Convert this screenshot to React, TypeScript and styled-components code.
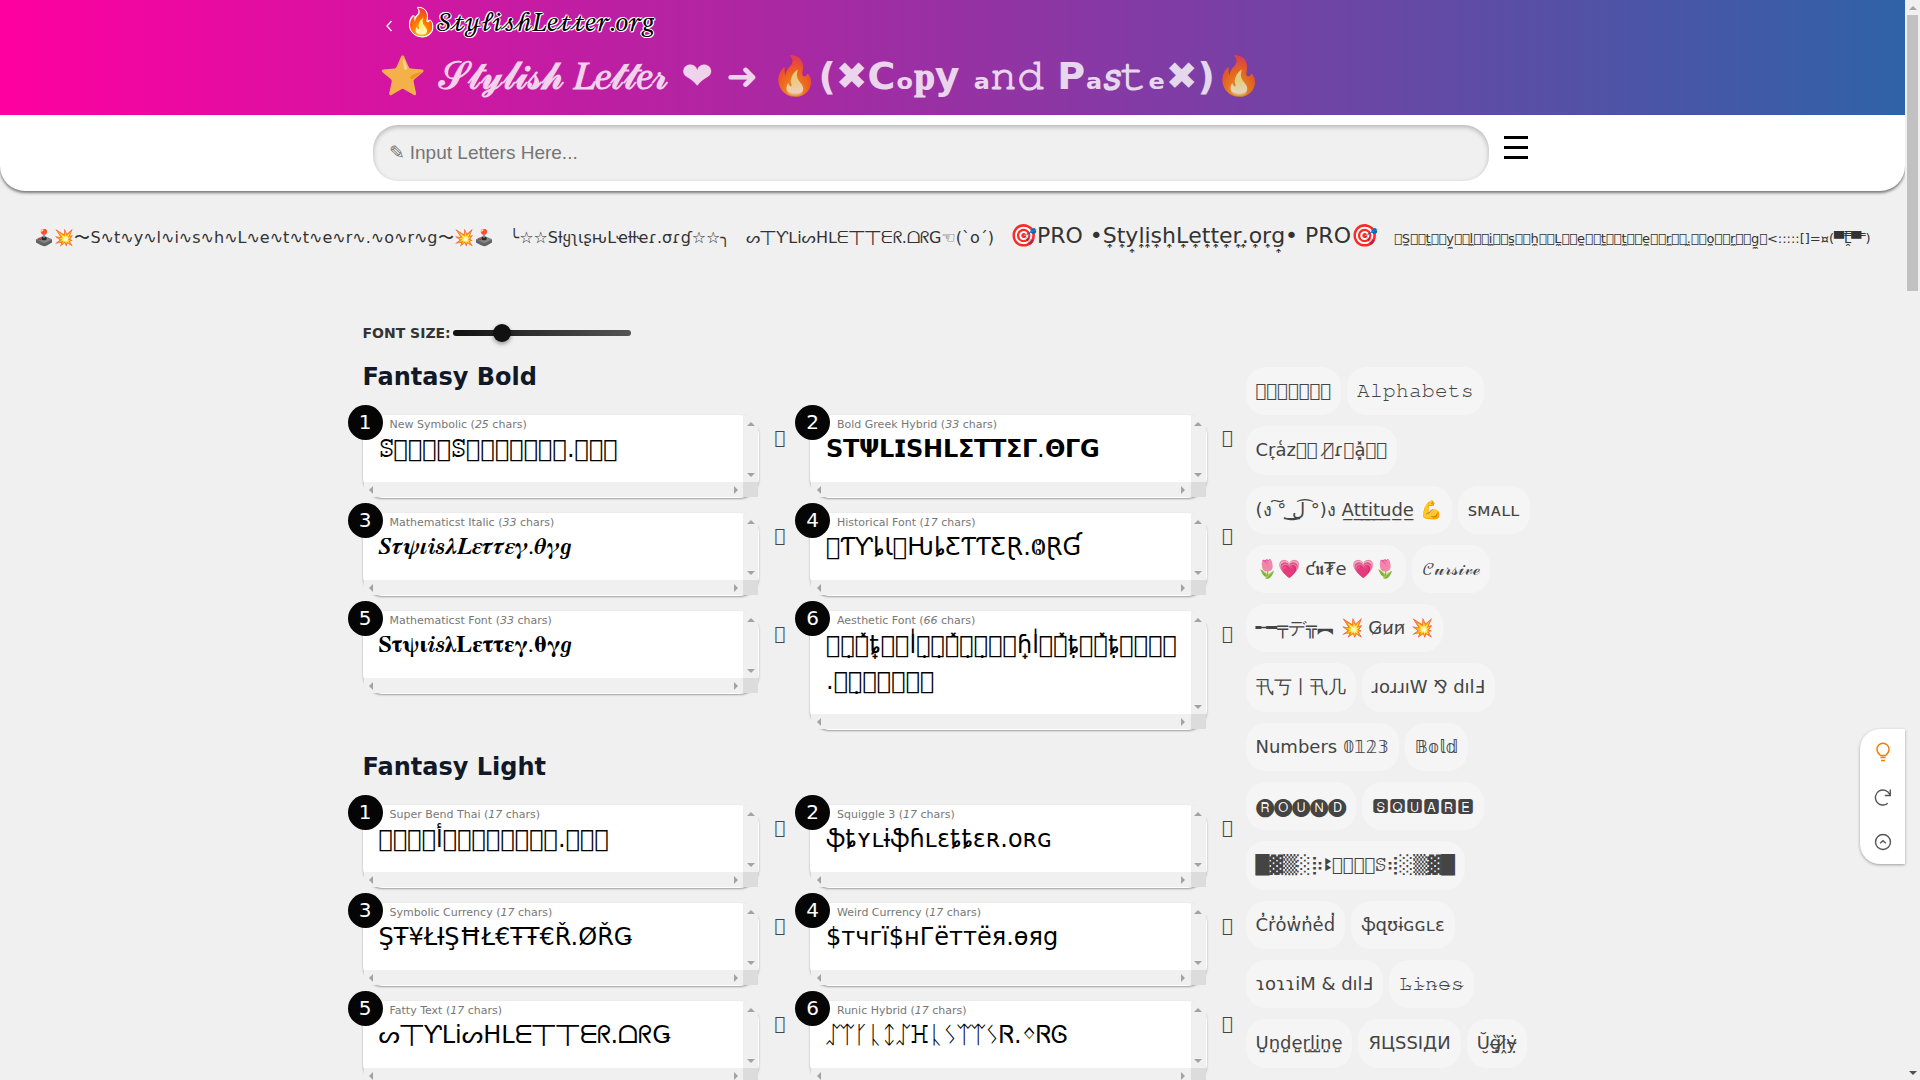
import React, { useState } from 'react';
import styled, { createGlobalStyle } from 'styled-components';

const SANS = '"DejaVu Sans", sans-serif';
const SERIF_MATH = '"FreeSerif", "DejaVu Sans", sans-serif';
const SCRIPT = '"STIX Two Math", "DejaVu Sans", sans-serif';
const CURSIVE = '"Latin Modern Math", "FreeSerif", "DejaVu Sans", sans-serif';

/* Placeholder box for a letter no installed font has */
const X = '\ue000';
const boxes = (n: number) => X.repeat(n);
const mark = (text: string, accent: string) => [...text].map((c) => c + accent).join('');

const GlobalStyle = createGlobalStyle`
  * { box-sizing: border-box; }
  body { margin: 0; background: #f0f0f0; color: #333; font-family: ${SANS}; }
  button { border: 0; padding: 0; background: none; font-family: inherit; cursor: pointer; }
`;

const Shell = styled.div`
  display: flex;
  align-items: flex-start;
`;
const Page = styled.div`
  flex: 1;
  min-width: 0;
`;

/* ---------- scroll bars ---------- */
const borders = {
  up: 'border-width: 0 4px 4px; border-bottom-color: currentColor;',
  down: 'border-width: 4px 4px 0; border-top-color: currentColor;',
  left: 'border-width: 4px 4px 4px 0; border-right-color: currentColor;',
  right: 'border-width: 4px 0 4px 4px; border-left-color: currentColor;',
};
const Arrow = styled.i<{ $dir: keyof typeof borders; $dark?: boolean }>`
  flex: none;
  width: 15px;
  height: 15px;
  display: grid;
  place-items: center;
  color: ${(p) => (p.$dark ? '#505050' : '#a3a3a3')};
  &::before {
    content: '';
    border: 0 solid transparent;
    ${(p) => borders[p.$dir]}
  }
`;
const PageScroll = styled.div`
  position: sticky;
  top: 0;
  width: 15px;
  height: 100vh;
  display: flex;
  flex-direction: column;
  background: #f0f0f0;
`;
const PageThumb = styled.div`
  flex: 276;
  margin: 0 2px;
  background: #c1c1c1;
`;
const Spacer = styled.div`
  flex: 774;
`;

/* ---------- header ---------- */
const Container = styled.div`
  width: 100%;
  max-width: 1180px;
  margin: 0 auto;
`;
const Hero = styled.header`
  background: linear-gradient(to right, #ff00a0, #2f62a7);
  padding-bottom: 11px;
`;
const Brand = styled.div`
  height: 48px;
  padding: 7px 20px 0;
  display: flex;
  align-items: flex-start;
  gap: 10px;
`;
const Back = styled.button`
  display: grid;
  place-items: center;
  width: 12px;
  height: 38px;
  color: #fff;
`;
const Logo = styled.a`
  height: 34px;
  font-family: ${SCRIPT};
  font-size: 26px;
  line-height: 34px;
  color: #000;
  text-decoration: none;
  white-space: nowrap;
  text-shadow: 1px 0 0 #fff, -1px 0 0 #fff, 0 1px 0 #fff, 0 -1px 0 #fff, 1px 1px 0 #fff, -1px -1px 0 #fff;
`;
const Title = styled.h1`
  margin: 0;
  padding-left: 16px;
  font-size: 38px;
  line-height: 56px;
  height: 56px;
  color: #fff;
  opacity: 0.8;
  white-space: nowrap;
`;
const Script = styled.span`
  font-family: ${SERIF_MATH};
`;
const SearchBar = styled.div`
  background: #fff;
  border-radius: 0 0 25px 25px;
  box-shadow: 0 2px 3px rgba(0, 0, 0, 0.5);
  padding: 10px 0;
`;
const SearchRow = styled(Container)`
  display: flex;
  padding: 0 5px 0 10px;
`;
const SearchInput = styled.input`
  flex: 1;
  min-width: 0;
  height: 56px;
  padding: 0 16px;
  border: 0;
  border-radius: 25px;
  background: #f0f0f0;
  box-shadow: inset 0 2px 5px rgba(0, 0, 0, 0.25);
  font-family: "Liberation Sans", Arial, sans-serif;
  font-size: 19px;
  outline: none;
  &::placeholder { color: #757575; }
`;
const MenuButton = styled.button`
  width: 44px;
  height: 44px;
  margin-left: 5px;
  display: grid;
  place-items: center;
`;

/* ---------- ticker ---------- */
const Ticker = styled.div`
  display: flex;
  justify-content: center;
  align-items: baseline;
  gap: 16px;
  padding: 30px 0 64px;
  white-space: nowrap;
  overflow: hidden;
`;
const TickerItem = styled.span<{ $size: number }>`
  font-size: ${(p) => p.$size}px;
  line-height: 30px;
  height: 30px;
`;

/* ---------- content ---------- */
const Content = styled(Container)`
  display: flex;
  gap: 3px;
`;
const Main = styled.main`
  flex: 1;
  min-width: 0;
`;
const SizeControl = styled.div`
  display: flex;
  align-items: center;
  height: 30px;
  gap: 2px;
`;
const SizeLabel = styled.label`
  font-size: 14px;
  font-weight: bold;
`;
const Slider = styled.input`
  appearance: none;
  width: 178px;
  height: 6px;
  margin: 0;
  border-radius: 3px;
  background: linear-gradient(to right, #111, #555);
  &::-webkit-slider-thumb {
    appearance: none;
    width: 18px;
    height: 18px;
    border-radius: 50%;
    background: #111;
    box-shadow: 0 2px 4px rgba(0, 0, 0, 0.4);
  }
`;
const Heading = styled.h2`
  margin: 13px 0 22px;
  font-size: 24px;
  line-height: 32px;
  color: #111827;
`;
const Grid = styled.div`
  display: grid;
  grid-template-columns: 1fr 1fr;
  gap: 15px;
  align-items: start;
  margin-bottom: 21px;
`;
const Cell = styled.div`
  display: flex;
  align-items: flex-start;
`;
const Card = styled.article`
  position: relative;
  flex: 1;
  min-width: 0;
  display: grid;
  grid-template-columns: 1fr 15px;
  grid-template-rows: 1fr 15px;
  border: 1px solid #fff;
  border-radius: 20px;
  background: #fff;
  box-shadow: 0 1px 2px rgba(0, 0, 0, 0.35);
`;
const Badge = styled.span`
  position: absolute;
  left: -16px;
  top: -11px;
  width: 35px;
  height: 35px;
  border-radius: 50%;
  background: #050505;
  color: #fff;
  font-size: 20px;
  line-height: 35px;
  text-align: center;
`;
const CardBody = styled.div`
  min-width: 0;
  padding: 3px 11px 15px 15px;
  background: #fff;
`;
const CardLabel = styled.div`
  padding-left: 11px;
  font-size: 11px;
  line-height: 12px;
  color: #777;
`;
const CardText = styled.div<{ $font: string }>`
  font-family: ${(p) => p.$font};
  line-height: 36px;
  min-height: 36px;
  color: #000;
  overflow-wrap: anywhere;
`;
const Track = styled.div<{ $vertical?: boolean }>`
  display: flex;
  flex-direction: ${(p) => (p.$vertical ? 'column' : 'row')};
  justify-content: space-between;
  background: #f0f0f0;
`;
const Corner = styled.div`
  background: #dcdcdc;
`;
const Copy = styled.button`
  width: 36px;
  margin-top: 13px;
  padding-left: 6px;
  font-size: 18px;
  line-height: 20px;
  color: #444;
`;

/* ---------- side links ---------- */
const Side = styled.nav`
  width: 297px;
  display: flex;
  flex-wrap: wrap;
  align-content: flex-start;
  gap: 11px 6px;
  padding-top: 49px;
`;
const Chip = styled.a<{ $font?: string }>`
  padding: 12px 10px;
  border-radius: 20px;
  background: #f5f5f5;
  color: #444;
  font-family: ${(p) => p.$font || SANS};
  font-size: 18px;
  line-height: 1.35;
  max-height: 49px;
  text-decoration: none;
  white-space: nowrap;
`;

/* ---------- floating tools ---------- */
const Tools = styled.div`
  position: fixed;
  right: 15px;
  bottom: 216px;
  width: 45px;
  display: flex;
  flex-direction: column;
  border-radius: 20px 0 0 20px;
  background: #fff;
  box-shadow: 0 1px 3px rgba(0, 0, 0, 0.35);
`;
const Tool = styled.button<{ $accent?: boolean }>`
  height: 45px;
  display: grid;
  place-items: center;
  color: ${(p) => (p.$accent ? '#f57c00' : '#555')};
`;

type Sample = { name: string; count: number; text: string; font?: string };

const BOLD: Sample[] = [
  { name: 'New Symbolic', count: 25, text: `ꕷ${boxes(4)}ꕷ${boxes(7)}.${boxes(3)}` },
  { name: 'Bold Greek Hybrid', count: 33, text: '𝗦𝗧𝝭𝗟𝗜𝗦𝗛𝗟𝝨𝗧𝗧𝝨𝝘.𝝝𝝘𝗚' },
  { name: 'Mathematicst Italic', count: 33, text: '𝑺𝝉𝝍𝜾𝒊𝒔𝝀𝑳𝜺𝝉𝝉𝜺𝜸.𝜽𝜸𝒈', font: SERIF_MATH },
  { name: 'Historical Font', count: 17, text: `${X}ƬƳȴƖ${X}ԊȴƸƬƬƸⱤ.\u2c19ⱤƓ` },
  { name: 'Mathematicst Font', count: 33, text: '𝐒𝛕𝛙𝛊𝒊𝒔𝛌𝐋𝛆𝛕𝛕𝛆𝛄.𝛉𝛄𝒈', font: SERIF_MATH },
  {
    name: 'Aesthetic Font',
    count: 66,
    text: `${X}${X}\u0323${X}\u033dȶ\u031f${X}${X}l\u030d${X}\u0323${X}\u0323${X}\u033d${X}\u0323${X}\u0323${X}${X}ɦ\u031fl\u030d${X}${X}\u033dȶ\u0323${X}${X}\u033dȶ\u0323${boxes(4)}.${X}${X}\u0323${boxes(5)}`,
  },
];
const LIGHT: Sample[] = [
  { name: 'Super Bend Thai', count: 17, text: `${boxes(4)}أ${boxes(8)}.${boxes(3)}` },
  { name: 'Squiggle 3', count: 17, text: 'ֆȶʏʟɨֆɦʟɛȶȶɛʀ.օʀɢ' },
  { name: 'Symbolic Currency', count: 17, text: 'ŞŦ¥ŁƗŞĦŁ€ŦŦ€Ř.ØŘǤ' },
  { name: 'Weird Currency', count: 17, text: '$тчгї$нГёттёя.өяg' },
  { name: 'Fatty Text', count: 17, text: 'ᔕ丅ƳᒪiᔕHᒪᗴ丅丅ᗴᖇ.ᗝᖇǤ' },
  { name: 'Runic Hybrid', count: 17, text: 'ᛢᛠᚴᚳᛨᛢꖾᚳᛊᛠᛠᛊᏒ.ᛜᏒᎶ' },
];

const CHIPS: { text: string; font?: string }[] = [
  { text: boxes(7) },
  { text: '𝙰𝚕𝚙𝚑𝚊𝚋𝚎𝚝𝚜' },
  { text: `Cr\u031fa\u0351z${X}${X} ${X}\u0338ɾ${X}a\u033d\u0353${X}${X}` },
  { text: `(ง ͠° ͟ل͜ ͡°)ง ${mark('Attitude', '\u0332')} 💪` },
  { text: 'ꜱᴍᴀʟʟ' },
  { text: '🌷💗 ƈ𝖚₮e 💗🌷' },
  { text: '𝒞𝓊𝓇𝓈𝒾𝓋ℯ', font: CURSIVE },
  { text: '╾━╤デ╦︻ 💥 G̷u̷n̷ 💥' },
  { text: '卂丂丨卂几' },
  { text: 'ɹoɹɹıW ⅋ dılℲ' },
  { text: 'Numbers 𝟘𝟙𝟚𝟛' },
  { text: '𝔹𝕠𝕝𝕕' },
  { text: '🅡🅞🅤🅝🅓' },
  { text: '🆂🆀🆄🅰🆁🅴' },
  { text: `█▓▒░⡷ꔪ${boxes(4)}ꕷ⢾░▒▓█` },
  { text: mark('Crowned', '\u0313') },
  { text: 'ֆզʊɨɢɢʟɛ' },
  { text: 'ɿoɿɿiM & dılℲ' },
  { text: mark('𝙻𝚒𝚗𝚎𝚜', '\u0334') },
  { text: mark('Underline', '\u033a') },
  { text: 'ЯЦSSIДИ' },
  { text: 'U\u0306\u032eg\u0336\u0353\u030fl\u0337\u032d\u0303y\u0334\u0323\u0307' },
];

const TICKER: { size: number; text: string }[] = [
  { size: 16, text: '🕹️💥〜' + [...'StylishLetter.org'].join('∿') + '〜💥🕹️' },
  { size: 16, text: '╰☆☆Sƚყʅιʂԋ\u2060Lҽƚƚҽɾ.σɾɠ☆☆╮' },
  { size: 16, text: 'ᔕ丅ƳᒪiᔕHᒪᗴ丅丅ᗴᖇ.ᗝᖇG☜(`o´)' },
  { size: 22, text: `🎯PRO •${mark('StylishLetter.org', '\u034e')}• PRO🎯` },
  {
    size: 13,
    text: [...'StylishLetter.org'].map((c) => `${X}${c}\u033c${X}`).join('') + '<:::::[]=¤(▀̿̿Ĺ̯̿̿▀̿ ̿)',
  },
];

function Samples({ items, size }: { items: Sample[]; size: number }) {
  return (
    <Grid>
      {items.map((s, i) => (
        <Cell key={s.name}>
          <Card>
            <CardBody>
              <CardLabel>
                {s.name} (<i>{s.count}</i> chars)
              </CardLabel>
              <CardText $font={s.font || SANS} style={{ fontSize: size }}>
                {s.text}
              </CardText>
            </CardBody>
            <Track $vertical>
              <Arrow $dir="up" />
              <Arrow $dir="down" />
            </Track>
            <Track>
              <Arrow $dir="left" />
              <Arrow $dir="right" />
            </Track>
            <Corner />
            <Badge>{i + 1}</Badge>
          </Card>
          <Copy type="button" aria-label={`Copy ${s.name}`}>
            {X}
          </Copy>
        </Cell>
      ))}
    </Grid>
  );
}

export default function App() {
  const [size, setSize] = useState(24);
  return (
    <Shell>
      <GlobalStyle />
      <Page>
        <Hero>
          <Container>
            <Brand>
              <Back type="button" aria-label="Back">
                <svg width="8" height="12" viewBox="0 0 8 12" fill="none" stroke="currentColor" strokeWidth="1.3">
                  <path d="M6.500 1 2 6l4.500 5" />
                </svg>
              </Back>
              <Logo href="#">🔥𝒮𝓉𝓎𝓁𝒾𝓈𝒽𝐿𝑒𝓉𝓉𝑒𝓇.𝑜𝓇𝑔</Logo>
            </Brand>
            <Title>
              ⭐ <Script>𝒮𝓉𝓎𝓁𝒾𝓈𝒽 𝐿𝑒𝓉𝓉𝑒𝓇</Script> ❤ ➜ 🔥(✖Cₒ<Script>𝐩</Script>y ₐ𝚗𝚍 Pₐ𝘴𝚝ₑ✖)🔥
            </Title>
          </Container>
        </Hero>
        <SearchBar>
          <SearchRow>
            <SearchInput type="text" aria-label="Input letters" placeholder="✎ Input Letters Here..." />
            <MenuButton type="button" aria-label="Menu">
              <svg width="24" height="23" viewBox="0 0 24 23">
                <path d="M0 0h24v3H0zM0 10h24v3H0zM0 20h24v3H0z" />
              </svg>
            </MenuButton>
          </SearchRow>
        </SearchBar>
        <Ticker>
          {TICKER.map((t) => (
            <TickerItem key={t.text} $size={t.size}>
              {t.text}
            </TickerItem>
          ))}
        </Ticker>
        <Content>
          <Main>
            <SizeControl>
              <SizeLabel htmlFor="font-size">FONT SIZE:</SizeLabel>
              <Slider
                id="font-size"
                type="range"
                min={14}
                max={54}
                value={size}
                onChange={(e) => setSize(Number(e.target.value))}
              />
            </SizeControl>
            <Heading>Fantasy Bold</Heading>
            <Samples items={BOLD} size={size} />
            <Heading>Fantasy Light</Heading>
            <Samples items={LIGHT} size={size} />
          </Main>
          <Side>
            {CHIPS.map((c) => (
              <Chip key={c.text} href="#" $font={c.font}>
                {c.text}
              </Chip>
            ))}
          </Side>
        </Content>
      </Page>
      <PageScroll aria-hidden>
        <Arrow $dir="up" />
        <PageThumb />
        <Spacer />
        <Arrow $dir="down" $dark />
      </PageScroll>
      <Tools>
        <Tool type="button" $accent aria-label="Tips">
          <svg width="18" height="20" viewBox="0 0 18 20" fill="none" stroke="currentColor" strokeWidth="1.4">
            <path d="M6.500 13.500C4.500 12 3 10 3 7.300a6 6 0 0 1 12 0c0 2.700-1.500 4.700-3.500 6.200zM6.500 15.500h5M7 18.500h4" />
          </svg>
        </Tool>
        <Tool type="button" aria-label="Refresh">
          <svg width="18" height="18" viewBox="0 0 18 18" fill="none" stroke="currentColor" strokeWidth="1.400">
            <path d="M13.800 15.200A7.500 7.500 0 1 1 15.800 6.500M16.300 1.500v6h-5.500" />
          </svg>
        </Tool>
        <Tool type="button" aria-label="Back to top">
          <svg width="18" height="18" viewBox="0 0 18 18" fill="none" stroke="currentColor" strokeWidth="1.400">
            <circle cx="9" cy="9" r="7.500" />
            <path d="m6.200 10.200 2.800-2.500 2.800 2.500" />
          </svg>
        </Tool>
      </Tools>
    </Shell>
  );
}
